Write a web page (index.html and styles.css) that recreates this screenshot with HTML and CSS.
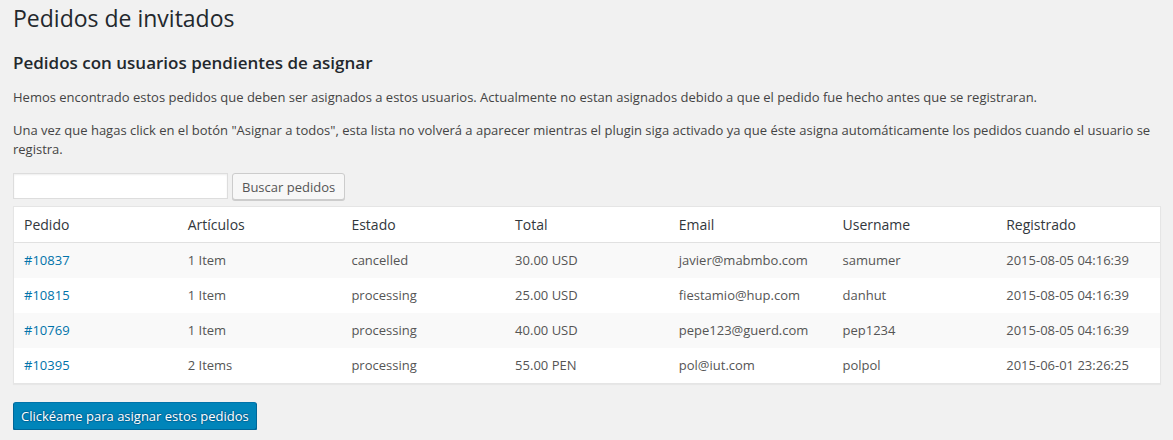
FILE: index.html
```html
<!DOCTYPE html>
<html lang="es">
<head>
    <meta charset="UTF-8">
    <meta name="viewport" content="width=device-width, initial-scale=1.0">
    <title>Pedidos de invitados</title>
    <link rel="stylesheet" href="styles.css">
</head>
<body>
    <div class="wrap">
        <h1>Pedidos de invitados</h1>
        <h2>Pedidos con usuarios pendientes de asignar</h2>
        <p>Hemos encontrado estos pedidos que deben ser asignados a estos usuarios. Actualmente no estan asignados debido a que el pedido fue hecho antes que se registraran.</p>
        <p>Una vez que hagas click en el botón "Asignar a todos", esta lista no volverá a aparecer mientras el plugin siga activado ya que éste asigna automáticamente los pedidos cuando el usuario se registra.</p>

        <form class="search-box">
            <input type="search" class="search-input">
            <button type="button" class="button">Buscar pedidos</button>
        </form>

        <table class="widefat striped">
            <thead>
                <tr>
                    <th>Pedido</th>
                    <th>Artículos</th>
                    <th>Estado</th>
                    <th>Total</th>
                    <th>Email</th>
                    <th>Username</th>
                    <th>Registrado</th>
                </tr>
            </thead>
            <tbody>
                <tr>
                    <td><a href="#">#10837</a></td>
                    <td>1 Item</td>
                    <td>cancelled</td>
                    <td>30.00 USD</td>
                    <td>javier@mabmbo.com</td>
                    <td>samumer</td>
                    <td>2015-08-05 04:16:39</td>
                </tr>
                <tr>
                    <td><a href="#">#10815</a></td>
                    <td>1 Item</td>
                    <td>processing</td>
                    <td>25.00 USD</td>
                    <td>fiestamio@hup.com</td>
                    <td>danhut</td>
                    <td>2015-08-05 04:16:39</td>
                </tr>
                <tr>
                    <td><a href="#">#10769</a></td>
                    <td>1 Item</td>
                    <td>processing</td>
                    <td>40.00 USD</td>
                    <td>pepe123@guerd.com</td>
                    <td>pep1234</td>
                    <td>2015-08-05 04:16:39</td>
                </tr>
                <tr>
                    <td><a href="#">#10395</a></td>
                    <td>2 Items</td>
                    <td>processing</td>
                    <td>55.00 PEN</td>
                    <td>pol@iut.com</td>
                    <td>polpol</td>
                    <td>2015-06-01 23:26:25</td>
                </tr>
            </tbody>
        </table>

        <p class="submit">
            <button type="button" class="button button-primary">Clickéame para asignar estos pedidos</button>
        </p>
    </div>
</body>
</html>
```

FILE: styles.css
```css
body {
    margin: 0;
    background: #f1f1f1;
    color: #444;
    font-family: "Open Sans", "Noto Sans", sans-serif;
    font-size: 13px;
    line-height: 1.5;
}
.wrap {
    padding: 0 12px 0 13px;
}
h1 {
    margin: 0;
    padding-top: 4px;
    font-size: 23px;
    font-weight: 400;
    line-height: 29px;
    color: #23282d;
}
h2 {
    margin: 19px 0 14px;
    font-size: 17px;
    font-weight: 600;
    line-height: 22px;
    color: #23282d;
}
p {
    margin: 13px 0;
}
.search-box {
    display: flex;
    gap: 4px;
    align-items: flex-start;
}
.search-input {
    width: 215px;
    height: 26px;
    margin: 0;
    padding: 3px 5px;
    box-sizing: border-box;
    border: 1px solid #ddd;
    background: #fff;
    box-shadow: inset 0 1px 2px rgba(0, 0, 0, 0.07);
    font-family: inherit;
    font-size: 14px;
}
.button {
    height: 27px;
    margin: 0;
    padding: 0 9px 1px;
    border: 1px solid #ccc;
    border-radius: 3px;
    background: #f7f7f7;
    box-shadow: 0 1px 0 #ccc;
    color: #555;
    font-family: inherit;
    font-size: 13px;
    line-height: 26px;
    cursor: pointer;
}
.button-primary {
    height: 28px;
    padding: 0 7px 1px;
    background: #0085ba;
    border-color: #0073aa #006799 #006799;
    box-shadow: 0 1px 0 #006799;
    color: #fff;
    text-shadow: 0 -1px 1px #006799, 1px 0 1px #006799, 0 1px 1px #006799, -1px 0 1px #006799;
}
.widefat {
    width: 100%;
    margin-top: 6px;
    border: 1px solid #e5e5e5;
    border-spacing: 0;
    background: #fff;
    box-shadow: 0 1px 1px rgba(0, 0, 0, 0.04);
    table-layout: fixed;
}
.widefat th {
    padding: 8px 10px;
    border-bottom: 1px solid #e1e1e1;
    text-align: left;
    font-size: 14px;
    font-weight: 400;
    line-height: 19px;
    color: #32373c;
}
.widefat td {
    padding: 8px 10px;
    line-height: 19px;
    color: #555;
}
.striped tbody tr:nth-child(odd) {
    background: #f9f9f9;
}
a {
    color: #0073aa;
    text-decoration: none;
}
.submit {
    margin: 18px 0 0;
}
```
